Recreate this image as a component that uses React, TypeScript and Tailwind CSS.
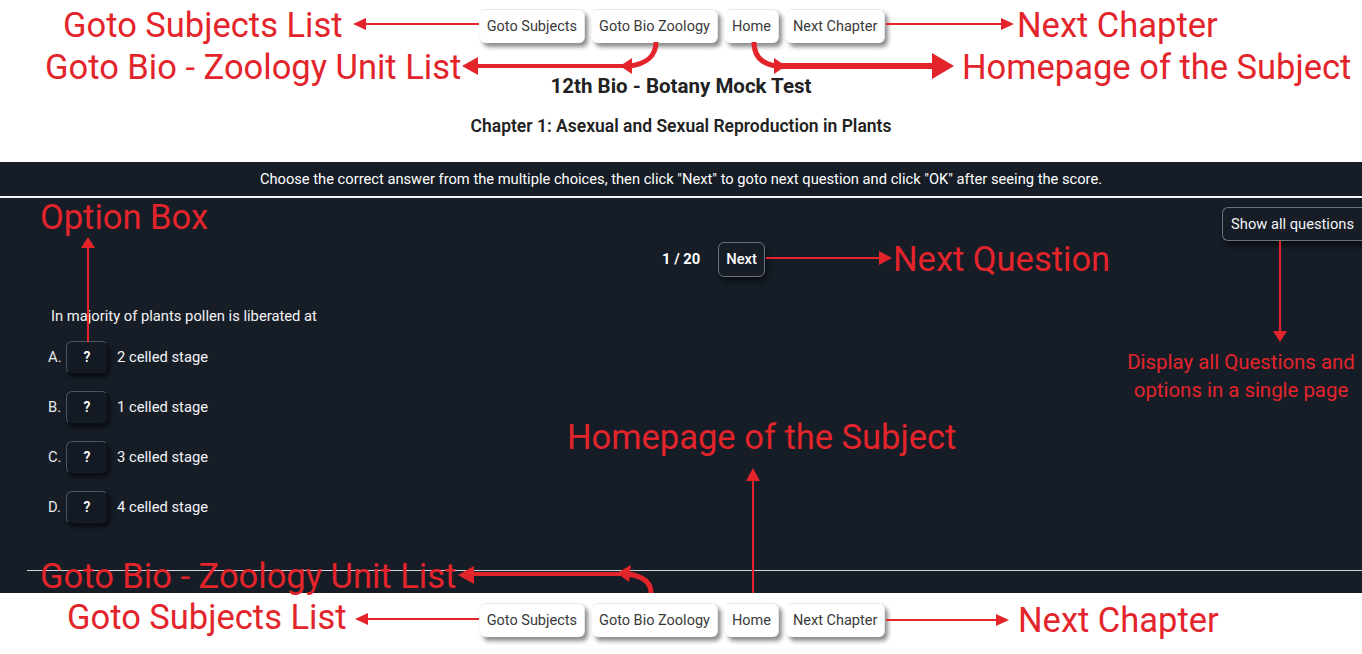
import React from 'react'

const RED = '#e3242b'

const navButtons = ['Goto Subjects', 'Goto Bio Zoology', 'Home', 'Next Chapter']

const options = [
  { key: 'A', text: '2 celled stage' },
  { key: 'B', text: '1 celled stage' },
  { key: 'C', text: '3 celled stage' },
  { key: 'D', text: '4 celled stage' },
]

function NavRow({ className }: { className: string }) {
  return (
    <div className={`flex justify-center gap-[7px] pl-[3px] ${className}`}>
      {navButtons.map(label => (
        <button
          key={label}
          type="button"
          className="h-[34px] rounded-[6px] border-r border-t border-gray-200 bg-white px-[7px] text-[14.5px] text-[#3a3a3a] shadow-[3px_4px_4px_rgba(0,0,0,0.45)]"
        >
          {label}
        </button>
      ))}
    </div>
  )
}

function Label({ text, className }: { text: string; className: string }) {
  return (
    <span className={`absolute whitespace-nowrap text-[34.5px] leading-[40px] text-[#e3242b] ${className}`}>
      {text}
    </span>
  )
}

function Annotations() {
  return (
    <div className="pointer-events-none absolute inset-0">
      <svg width="1362" height="654" className="absolute left-0 top-0" fill="none">
        {/* top: goto subjects */}
        <line x1="364" y1="24" x2="479" y2="24" stroke={RED} strokeWidth="2" />
        <polygon points="353,24 366,18 366,30" fill={RED} />
        {/* top: next chapter */}
        <line x1="886" y1="24" x2="1002" y2="24" stroke={RED} strokeWidth="2" />
        <polygon points="1014,24 1001,18 1001,30" fill={RED} />
        {/* top: goto bio zoology hook */}
        <path d="M656 42 C 656 56, 646 64, 630 66" stroke={RED} strokeWidth="5" />
        <polygon points="620,66 632,58 632,74" fill={RED} />
        <line x1="476" y1="66" x2="624" y2="66" stroke={RED} strokeWidth="4" />
        <polygon points="462,66 478,57 478,75" fill={RED} />
        {/* top: home hook */}
        <path d="M754 42 C 754 56, 762 64, 776 66" stroke={RED} strokeWidth="5" />
        <polygon points="786,66 774,58 774,74" fill={RED} />
        <line x1="780" y1="66" x2="936" y2="66" stroke={RED} strokeWidth="6" />
        <polygon points="954,66 932,53 932,79" fill={RED} />
        {/* option box */}
        <line x1="88" y1="246" x2="88" y2="342" stroke={RED} strokeWidth="2" />
        <polygon points="88,237 81,248 95,248" fill={RED} />
        {/* next question */}
        <line x1="766" y1="258" x2="882" y2="258" stroke={RED} strokeWidth="2" />
        <polygon points="892,258 879,251 879,265" fill={RED} />
        {/* show all questions */}
        <line x1="1280" y1="241" x2="1280" y2="333" stroke={RED} strokeWidth="2" />
        <polygon points="1280,342 1273,331 1287,331" fill={RED} />
        {/* middle home */}
        <line x1="753" y1="478" x2="753" y2="593" stroke={RED} strokeWidth="2" />
        <polygon points="753,468 746,481 760,481" fill={RED} />
        {/* bottom: goto bio zoology hook */}
        <path d="M651 593 C 651 582, 642 576, 628 574" stroke={RED} strokeWidth="5" />
        <polygon points="617,573 631,565 629,582" fill={RED} />
        <line x1="470" y1="574" x2="622" y2="574" stroke={RED} strokeWidth="4" />
        <polygon points="458,575 474,566 474,584" fill={RED} />
        {/* bottom: goto subjects */}
        <line x1="366" y1="619" x2="479" y2="619" stroke={RED} strokeWidth="2" />
        <polygon points="355,619 368,613 368,625" fill={RED} />
        {/* bottom: next chapter */}
        <line x1="886" y1="620" x2="998" y2="620" stroke={RED} strokeWidth="2" />
        <polygon points="1009,620 996,614 996,626" fill={RED} />
      </svg>

      <Label text="Goto Subjects List" className="left-[63px] top-[5px]" />
      <Label text="Goto Bio - Zoology Unit List" className="left-[45px] top-[47px]" />
      <Label text="Next Chapter" className="left-[1017px] top-[5px]" />
      <Label text="Homepage of the Subject" className="left-[962px] top-[47px]" />
      <Label text="Option Box" className="left-[40px] top-[197px]" />
      <Label text="Next Question" className="left-[893px] top-[239px]" />
      <Label text="Homepage of the Subject" className="left-[567px] top-[417px]" />
      <Label text="Goto Bio - Zoology Unit List" className="left-[40px] top-[556px]" />
      <Label text="Goto Subjects List" className="left-[67px] top-[597px]" />
      <Label text="Next Chapter" className="left-[1018px] top-[600px]" />
      <div className="absolute left-[1120px] top-[348px] w-[242px] text-center text-[20.4px] leading-[28px] text-[#e3242b]">
        Display all Questions and
        <br />
        options in a single page
      </div>
    </div>
  )
}

export default function App() {
  return (
    <div className="relative h-[654px] overflow-hidden bg-white font-['Roboto',sans-serif]">
      <div className="h-[162px]">
        <NavRow className="pt-[9px]" />
        <h1 className="mt-[30px] text-center text-[20.5px] font-bold leading-[26px] text-[#222]">12th Bio - Botany Mock Test</h1>
        <h2 className="mt-[15px] text-center text-[17.5px] font-semibold leading-[24px] text-[#222]">
          Chapter 1: Asexual and Sexual Reproduction in Plants
        </h2>
      </div>

      <div className="bg-[#161d27] text-white">
        <div className="flex h-[34px] items-center justify-center text-[14.7px]">
          Choose the correct answer from the multiple choices, then click "Next" to goto next question and click "OK" after seeing the score.
        </div>
        <div className="h-[2px] bg-gray-100" />

        <div className="h-[395px] pt-[9px]">
          <div className="flex justify-end">
            <button type="button" className="h-[34px] rounded-l-[6px] border border-r-0 border-gray-500 px-[8px] text-[14.7px] text-gray-100 shadow-[2px_4px_6px_rgba(0,0,0,0.6)]">
              Show all questions
            </button>
          </div>

          <div className="mt-[1px] flex items-center gap-[18px] pl-[662px]">
            <span className="text-[14.75px] font-bold">1 / 20</span>
            <button type="button" className="h-[35px] rounded-[6px] border border-gray-500 px-[7px] text-[14.75px] font-medium shadow-[2px_4px_6px_rgba(0,0,0,0.6)]">
              Next
            </button>
          </div>

          <p className="mt-[29px] pl-[51px] text-[14.75px] leading-[20px] text-gray-100">In majority of plants pollen is liberated at</p>

          <div className="mt-[15px] flex flex-col gap-[17px] pl-[48px]">
            {options.map(option => (
              <div key={option.key} className="flex items-center">
                <span className="w-[18px] text-[14.75px] text-gray-200">{option.key}.</span>
                <span className="flex h-[33px] w-[42px] items-center justify-center rounded-[6px] border border-gray-600 border-b-black/40 border-r-black/40 bg-[#141a23] text-[14px] font-semibold shadow-[2px_3px_4px_rgba(0,0,0,0.6)]">
                  ?
                </span>
                <span className="ml-[9px] text-[14.75px] text-gray-100">{option.text}</span>
              </div>
            ))}
          </div>

          <div className="ml-[27px] mt-[46px] h-px bg-gray-300" />
        </div>
      </div>

      <NavRow className="pt-[10px]" />

      <Annotations />
    </div>
  )
}
